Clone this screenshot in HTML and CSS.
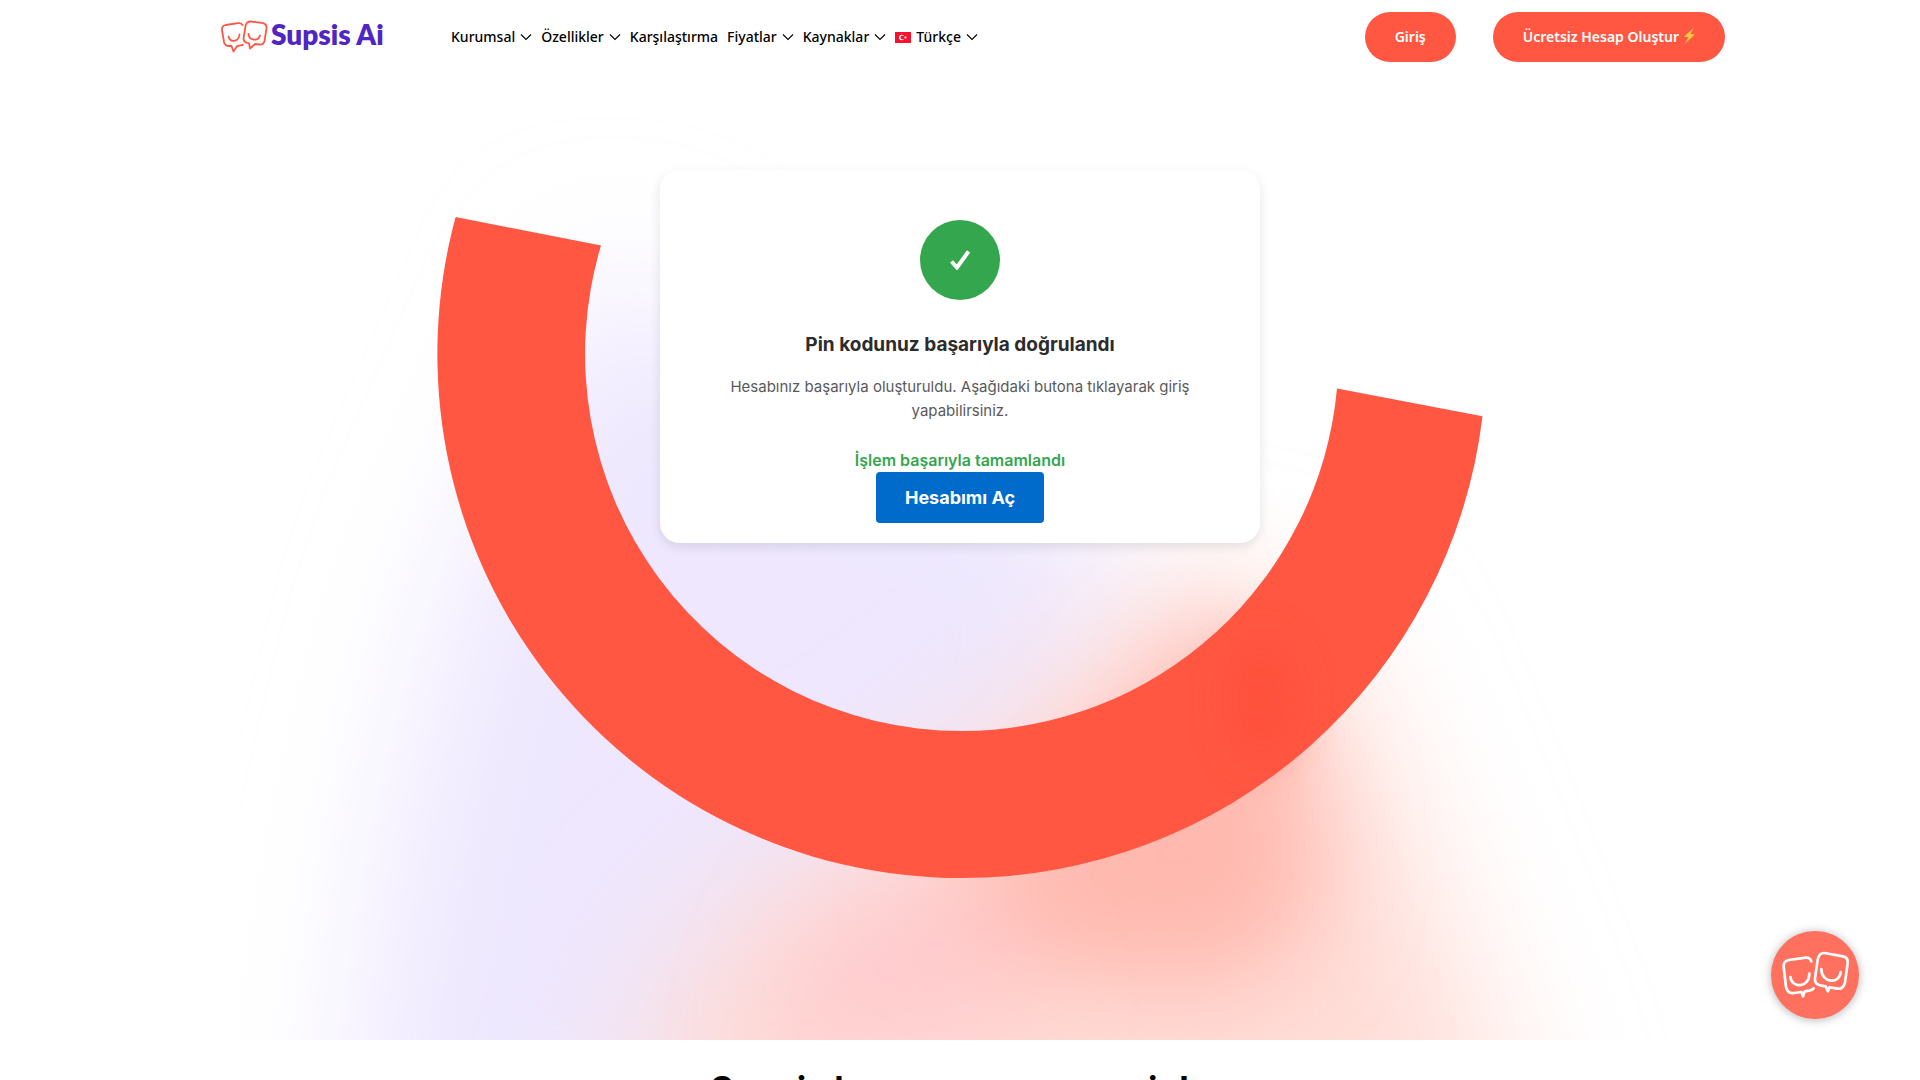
FILE: index.html
```html
<!DOCTYPE html>
<html lang="tr">
<head>
<meta charset="utf-8">
<meta name="viewport" content="width=device-width, initial-scale=1">
<title>Supsis Ai</title>
<link rel="stylesheet" href="styles.css">
</head>
<body>
<svg class="defs" aria-hidden="true">
  <symbol id="chev" viewBox="0 0 12 8"><path d="M1 1.500l5 5 5-5" fill="none" stroke="currentColor" stroke-width="1.100"/></symbol>
</svg>
<header class="header">
  <a class="logo" href="#">
    <svg class="logo-mark" viewBox="0 0 60 44" fill="none" stroke="currentColor" stroke-width="1.800" stroke-linecap="round" stroke-linejoin="round" aria-hidden="true">
      <path d="M26.500 13Q25 10.800 22 11.200L9.500 13Q5.500 14 6 18L8 30Q9 34 13 34L15.500 34L17.500 39.500L21 34.200L27 32.800"/>
      <path d="M35 9.500L47 11.200Q51 12.500 50.500 16.500L48.500 29Q47.500 33 43.500 32.500L39 32L34 36.500L33 31.200L31 30.800Q27 29.500 27.600 26L29.600 13.500Q30.600 9.300 35 9.500Z"/>
      <path d="M12.500 24.500C14 30.500 22.500 30.500 23.500 22.500M32.500 22C33 28.500 42 30 44 23.500"/>
    </svg>
    <span>Supsis Ai</span>
  </a>
  <nav class="nav">
    <a href="#">Kurumsal <svg class="chev"><use href="#chev"/></svg></a>
    <a href="#">Özellikler <svg class="chev"><use href="#chev"/></svg></a>
    <a href="#">Karşılaştırma</a>
    <a href="#">Fiyatlar <svg class="chev"><use href="#chev"/></svg></a>
    <a href="#">Kaynaklar <svg class="chev"><use href="#chev"/></svg></a>
    <a href="#"><svg class="flag" viewBox="0 0 16 11"><path fill="#f5122d" d="M0 0h16v11H0z"/><circle cx="6.800" cy="5.500" r="2.700" fill="#fff"/><circle cx="7.600" cy="5.500" r="2.100" fill="#f5122d"/><path fill="#fff" d="M9 5.500l1-.4.100-1.100.7.900 1.100-.3-.7.900.7.900-1.100-.3-.7.900-.1-1.100z"/></svg>Türkçe <svg class="chev"><use href="#chev"/></svg></a>
  </nav>
  <div class="actions">
    <button class="pill" type="button">Giriş</button>
    <button class="pill" type="button">Ücretsiz Hesap Oluştur<svg class="bolt" viewBox="0 0 12 16"><path d="M10.500 0L1 8.800l4.200.5L2 15.800 11.800 6.600l-4.300-.5z" fill="#ffc83d"/></svg></button>
  </div>
</header>
<main>
  <section class="hero">
    <svg class="art" viewBox="240 74 1440 966" aria-hidden="true">
      <defs>
        <filter id="wide" x="-60%" y="-60%" width="220%" height="220%"><feGaussianBlur stdDeviation="72"/></filter>
        <filter id="soft" x="-60%" y="-60%" width="220%" height="220%"><feGaussianBlur stdDeviation="50"/></filter>
        <filter id="glow" x="-60%" y="-60%" width="220%" height="220%"><feGaussianBlur stdDeviation="22"/></filter>
      </defs>
      <path filter="url(#wide)" fill="#eee7fe" d="M600 260L760 380 1100 480 1130 700 800 1150 340 1200 390 850 450 600Z"/>
      <path filter="url(#wide)" fill="#ffdcd6" d="M1180 590L1330 650 1400 820 1530 1160 600 1200 690 940 960 770Z"/>
      <path filter="url(#soft)" fill="#ffb3a7" fill-opacity=".85" d="M1230 590L1310 800 1320 900 1240 985 1030 970 930 900 1070 780Z"/>
      <path filter="url(#soft)" fill="#ffbfc8" fill-opacity=".6" d="M820 910L980 880 1040 1020 760 1060Z"/>
      <path fill="#ff5742" d="M455.600 217A524 524 0 0 0 961.500 878A524 524 0 0 0 1482.500 416.200L1337 388.500A377 377 0 0 1 961.500 731A377 377 0 0 1 601 245.500Z"/>
      <ellipse filter="url(#glow)" fill="#ff4c36" fill-opacity=".6" cx="1262" cy="700" rx="34" ry="62"/>
    </svg>
    <div class="card">
      <div class="tick"><svg viewBox="0 0 20 20"><path d="M1.500 11.500L7 17.500 18.500 1.500" fill="none" stroke="#fff" stroke-width="4"/></svg></div>
      <h1>Pin kodunuz başarıyla doğrulandı</h1>
      <p class="text">Hesabınız başarıyla oluşturuldu. Aşağıdaki butona tıklayarak giriş yapabilirsiniz.</p>
      <p class="status">İşlem başarıyla tamamlandı</p>
      <button class="open" type="button">Hesabımı Aç</button>
    </div>
  </section>
  <h2 class="next">Supsis her zaman var seninle</h2>
</main>
<button class="chat" type="button" aria-label="Canlı destek">
  <svg viewBox="93 62 264 264" fill="none" stroke="#fff" stroke-width="8" stroke-linecap="round" stroke-linejoin="round" aria-hidden="true">
    <path d="M214 153Q210 141 197 142L147 149Q129 152 131 170L138 230Q143 252 163 248L184 245L189 258L194 243L208 241Q217 239 221 234"/>
    <path d="M253 128L309 138Q325 142 323 158L315 217Q310 237 293 235L268 231L264 243L257 228L240 225Q223 220 225 204L233 148Q237 127 253 128Z"/>
    <path d="M151 200C156 236 208 232 208 190M244 176C244 220 300 222 302 185"/>
  </svg>
</button>
</body>
</html>
```
FILE: styles.css
```css
* { box-sizing: border-box; }
body { margin: 0; background: #fff; color: #000; font-family: Inter, sans-serif; }
.defs { position: absolute; width: 0; height: 0; }
.header { display: flex; align-items: center; height: 74px; padding: 0 195px 0 216px; }
.logo { display: flex; align-items: center; width: 235px; padding-bottom: 6px; color: #5026c2; font: 800 28px/36px Lato, sans-serif; text-decoration: none; }
.logo-mark { width: 60px; height: 44px; margin-right: -5px; color: #ff5742; }
.nav { display: flex; gap: 9px; flex: 1; }
.nav a { display: flex; align-items: center; gap: 5px; color: #000; font: 500 14px/20px "Noto Sans", sans-serif; text-decoration: none; }
.chev { width: 12px; height: 8px; }
.flag { width: 16px; height: 11px; }
.actions { display: flex; gap: 37px; }
.pill { display: flex; align-items: center; gap: 4px; height: 50px; padding: 0 30px; border: 0; border-radius: 25px; background: #ff5742; color: #fff; font: 600 14px/20px "Noto Sans", sans-serif; }
.bolt { width: 12px; height: 16px; margin-bottom: 3px; }
.hero { position: relative; display: flex; justify-content: center; align-items: flex-start; height: 966px; padding-top: 96px; overflow: hidden; }
.art { position: absolute; top: 0; left: 50%; width: 1440px; height: 966px; transform: translateX(-50%); }
.card { position: relative; width: 600px; padding: 50px 60px 20px; border-radius: 20px; background: #fff; box-shadow: 0 4px 12px rgba(0,0,0,.1); text-align: center; }
.tick { display: grid; place-items: center; width: 80px; height: 80px; margin: 0 auto 30px; border-radius: 50%; background: #34a64e; }
.tick svg { width: 20px; height: 20px; }
.card h1 { margin: 0 0 15px; color: #2c2c2c; font-size: 19px; font-weight: 700; line-height: 30px; }
.card p { margin: 0; font-size: 16px; line-height: 24px; }
.card .text { margin-bottom: 25px; color: #5a5a5a; font-size: 15px; }
.card .status { color: #34a64e; font-weight: 600; }
.open { width: 168px; height: 51px; border: 0; border-radius: 4px; background: #006bcb; color: #fff; font: 700 18px/24px Inter, sans-serif; }
.next { margin: 25px 0 0; font-size: 35px; line-height: 48px; text-align: center; }
.chat { position: fixed; right: 61px; bottom: 61px; width: 88px; height: 88px; padding: 0; border: 0; border-radius: 50%; background: #ff705f; box-shadow: 0 1px 10px rgba(0,0,0,.3); }
.chat svg { display: block; width: 88px; height: 88px; }
```
